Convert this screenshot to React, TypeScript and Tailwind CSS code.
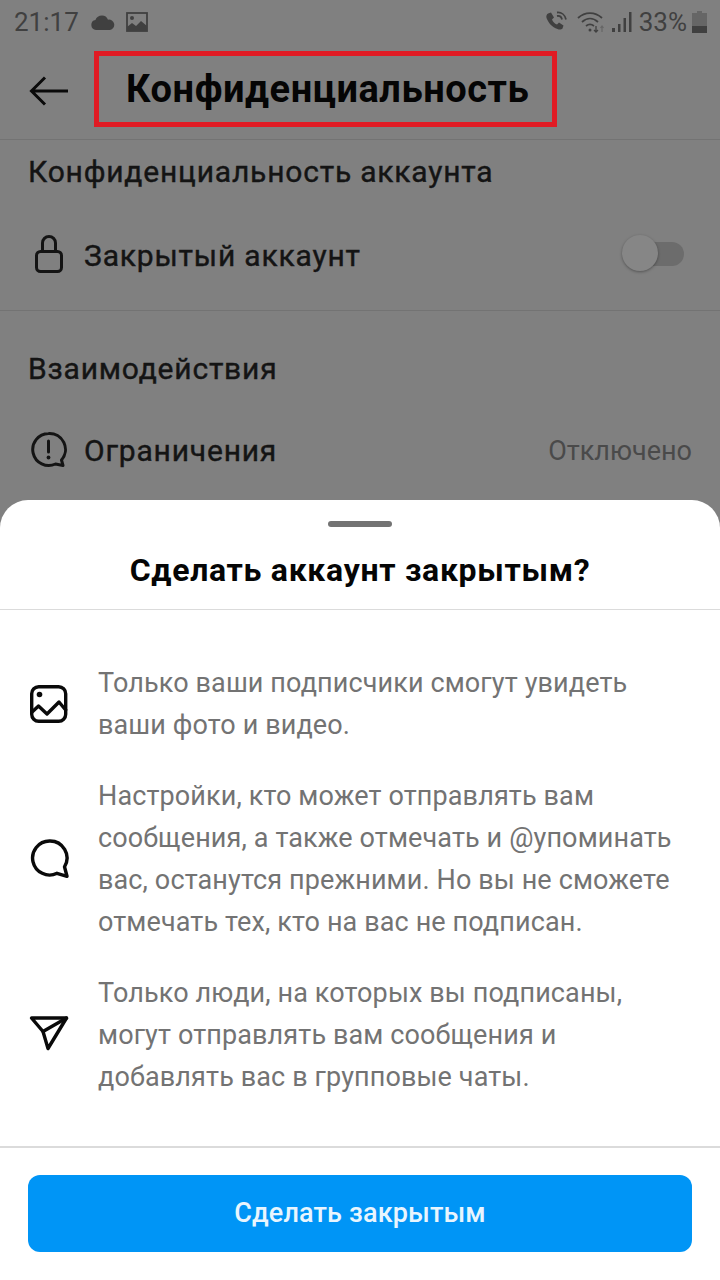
function StatusBar() {
  return (
    <div className="flex h-[44px] items-center justify-between pl-[14px] pr-[13px] text-[#404040]">
      <div className="flex items-center gap-[12px]">
        <span className="text-[26px] leading-none">21:17</span>
        <div className="flex items-center gap-[11px]">
          <svg width="24" height="15" viewBox="0 0 24 15" fill="#404040">
            <path d="M5 15a5 5 0 0 1-.6-9.9A7 7 0 0 1 11 0.5a6.5 6.5 0 0 1 6 4.2A5.2 5.2 0 0 1 19 15z" />
          </svg>
          <svg width="22" height="20" viewBox="0 0 22 20">
            <rect x="1" y="1" width="20" height="18" fill="none" stroke="#404040" strokeWidth="1.8" />
            <circle cx="6" cy="6" r="2" fill="#404040" />
            <path d="M1 19v-4l5-4 4 3 5-5 6 5v5z" fill="#404040" />
          </svg>
        </div>
      </div>
      <div className="flex items-center">
        <svg width="24" height="22" viewBox="0 0 24 22" fill="none" stroke="#404040" className="mr-[8px]">
          <path d="M3 2.5l3-1 3 5-2 2c1 2.500 2.500 4 5 5l2-2 4.500 3-1 3c-1 1-3 1.500-5 .5C7 16 3.500 12 1.500 7 1 5 1.500 3.500 3 2.500z" fill="#404040" stroke="none" />
          <path d="M12 5c2.500-.5 4.500 1 5 3.500M12 1.500c4.500-.5 8 2.500 9 7" strokeWidth="1.800" />
        </svg>
        <svg width="28" height="22" viewBox="0 0 28 22" fill="none" stroke="#404040" strokeWidth="1.800" className="mr-[7px]">
          <path d="M1 7c7-6.500 17-6.500 24 0M5 11c5-4.500 11-4.500 16 0M9 15c2.500-2 5.500-2 8 0" />
          <circle cx="13" cy="19" r="1.500" fill="#404040" stroke="none" />
          <path d="M19 15v6M17 19l2 2 2-2" strokeWidth="1.300" />
          <path d="M25 21v-6M23.500 17l1.500-2 1.500 2" strokeWidth="1.200" stroke="#666666" />
        </svg>
        <svg width="20" height="22" viewBox="0 0 20 22" fill="#404040" className="mr-[7px]">
          <rect x="0" y="17" width="3" height="4" />
          <rect x="6" y="13" width="2.500" height="8" />
          <rect x="11.500" y="7" width="2.500" height="14" />
          <rect x="17" y="1" width="2.500" height="20" />
        </svg>
        <span className="text-[26px] leading-none">33%</span>
        <svg width="15" height="22" viewBox="0 0 15 22" className="ml-[5px]">
          <path d="M5 0h5v2h5v20H0V2h5z" fill="#666666" />
          <rect x="0" y="15" width="15" height="7" fill="#404040" />
        </svg>
      </div>
    </div>
  );
}

function Header() {
  return (
    <div className="flex h-[96px] items-center border-b border-[#737373] pl-[29px]">
      <svg width="40" height="30" viewBox="0 0 40 30" fill="none" stroke="#0a0a0a" strokeWidth="3" className="-mt-[2px] shrink-0">
        <path d="M39 15H3M16 1.500L2.500 15 16 28.500" />
      </svg>
      <div className="ml-[25px] -mt-[6px] flex h-[76px] w-[463px] items-center border-[5px] border-[#e01b24] pl-[27px]">
        <h1 className="text-[38px] font-bold leading-none tracking-[0.55px] text-[#050505]">Конфиденциальность</h1>
      </div>
    </div>
  );
}

function Settings() {
  return (
    <div className="text-[#0d0d0d]">
      <div className="border-b border-[#737373] px-[28px] pb-[26px]">
        <div className="flex h-[62px] items-center text-[30px] font-normal tracking-[0.8px] text-[#141414] [-webkit-text-stroke:0.4px_#141414]">Конфиденциальность аккаунта</div>
        <div className="mt-[24px] flex h-[58px] items-center">
          <svg width="36" height="40" viewBox="0 0 36 40" fill="none" stroke="#141414" strokeWidth="3" className="mr-[20px] shrink-0 -translate-x-[1px]">
            <rect x="9.500" y="16.500" width="25" height="20" rx="4" />
            <path d="M15.500 16V8a6.500 6.500 0 0 1 13 0v8" />
          </svg>
          <span className="text-[30px] font-normal tracking-[0.82px] text-[#141414] [-webkit-text-stroke:0.4px_#141414]">Закрытый аккаунт</span>
          <div className="relative ml-auto mr-[8px] h-[24px] w-[48px] -translate-y-[1px] rounded-full bg-[#6c6c6c]">
            <div className="absolute -left-[14px] -top-[7px] h-[36px] w-[36px] rounded-full bg-[#868686] shadow-[0_1px_3px_rgba(0,0,0,0.35)]" />
          </div>
        </div>
      </div>
      <div className="px-[28px]">
        <div className="flex h-[114px] items-center text-[30px] font-normal tracking-[0.8px] text-[#141414] [-webkit-text-stroke:0.4px_#141414]">Взаимодействия</div>
        <div className="flex h-[50px] items-center">
          <svg width="40" height="40" viewBox="0 0 40 40" fill="none" stroke="#141414" strokeWidth="3" className="mr-[16px] shrink-0 -translate-x-[1px]">
            <path d="M21.500 3.500a16 16 0 1 0 7 30.500l7.500 1.500-1.500-5.500A16 16 0 0 0 21.500 3.500z" strokeLinejoin="round" />
            <path d="M21.500 11v11" strokeLinecap="round" />
            <circle cx="21.500" cy="27.500" r="1.900" fill="#141414" stroke="none" />
          </svg>
          <span className="text-[30px] font-normal tracking-[0.8px] text-[#141414] [-webkit-text-stroke:0.4px_#141414]">Ограничения</span>
          <span className="ml-auto mt-[2px] text-[27px] text-[#4a4a4a]">Отключено</span>
        </div>
      </div>
    </div>
  );
}

const sheetItems = [
  {
    lines: ['Только ваши подписчики смогут увидеть', 'ваши фото и видео.'],
    icon: (
      <svg width="40" height="40" viewBox="0 0 40 40" fill="none" stroke="#0a0a0a" strokeWidth="3.400">
        <rect x="2.700" y="2.700" width="34" height="34.600" rx="7" />
        <circle cx="10.500" cy="10.500" r="2.800" fill="#0a0a0a" stroke="none" />
        <path d="M2 29l7.500-7 8.500 8 12-12 7.500 9" strokeLinejoin="round" />
      </svg>
    ),
  },
  {
    lines: [
      'Настройки, кто может отправлять вам',
      'сообщения, а также отмечать и @упоминать',
      'вас, останутся прежними. Но вы не сможете',
      'отмечать тех, кто на вас не подписан.',
    ],
    icon: (
      <svg width="40" height="40" viewBox="0 0 40 40" fill="none" stroke="#0a0a0a" strokeWidth="3.400">
        <path d="M20.500 2a17 17 0 1 0 7.500 32.300l10 3-2.500-9.500A17 17 0 0 0 20.500 2z" strokeLinejoin="round" />
      </svg>
    ),
  },
  {
    lines: [
      'Только люди, на которых вы подписаны,',
      'могут отправлять вам сообщения и',
      'добавлять вас в групповые чаты.',
    ],
    icon: (
      <svg width="40" height="40" viewBox="0 0 40 40" fill="none" stroke="#0a0a0a" strokeWidth="3.400" strokeLinejoin="round" strokeLinecap="round">
        <path d="M2.500 3h35L19 33.500l-5-17z" />
        <path d="M14 16.500L37.500 3" />
      </svg>
    ),
  },
];

function BottomSheet() {
  return (
    <div className="absolute inset-x-0 bottom-0 flex h-[780px] flex-col rounded-t-[28px] bg-white">
      <div className="flex h-[110px] flex-col items-center border-b border-[#dbdbdb]">
        <div className="mt-[21px] h-[6px] w-[64px] rounded-full bg-[#737373]" />
        <h2 className="mt-[16px] text-[32px] font-bold leading-[54px] tracking-[0.7px] text-[#050505]">Сделать аккаунт закрытым?</h2>
      </div>
      <div className="flex flex-1 flex-col gap-[29px] pl-[29px] pt-[52px]">
        {sheetItems.map(item => (
          <div key={item.lines[0]} className="flex items-center">
            <div className="mr-[29px] shrink-0">{item.icon}</div>
            <div className="text-[27px] leading-[42px] tracking-[0.12px] text-[#737373]">
              {item.lines.map(line => (
                <div key={line} className="whitespace-nowrap">{line}</div>
              ))}
            </div>
          </div>
        ))}
      </div>
      <div className="h-[134px] border-t-2 border-[#dbdbdb] px-[28px] pt-[27px]">
        <button className="flex h-[77px] w-full items-center justify-center rounded-[12px] bg-[#0095f6] text-[27px] font-medium tracking-[0.15px] text-[#e8f5fe]">
          Сделать закрытым
        </button>
      </div>
    </div>
  );
}

export default function App() {
  return (
    <div className="relative h-[1280px] w-[720px] overflow-hidden bg-[#808080] font-['Roboto',sans-serif]">
      <StatusBar />
      <Header />
      <Settings />
      <BottomSheet />
    </div>
  );
}
